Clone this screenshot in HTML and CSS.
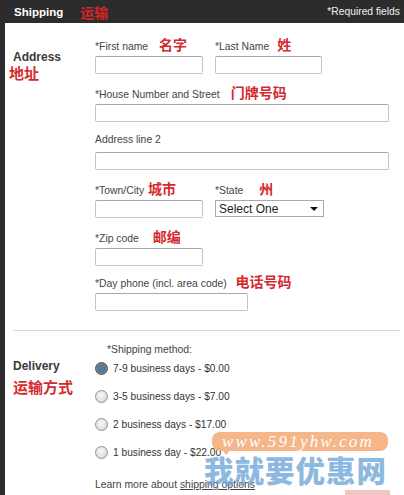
FILE: index.html
```html
<!DOCTYPE html>
<html>
<head>
<meta charset="utf-8">
<link rel="stylesheet" href="styles.css">
</head>
<body>
<div class="page">
  <header class="topbar">
    <span class="title">Shipping</span>
    <span class="cn cn-head">运输</span>
    <span class="req">*Required fields</span>
  </header>
  <main class="panel">
    <section class="sect address">
      <div class="sect-name">
        <div class="en">Address</div>
        <div class="cn cn-side cn-addr">地址</div>
      </div>
      <div class="fields">
        <div class="row">
          <div class="field">
            <div class="lbl">*First name <span class="cn cn-lbl gap8">名字</span></div>
            <div class="inp w108"></div>
          </div>
          <div class="field">
            <div class="lbl">*Last Name <span class="cn cn-lbl gap5">姓</span></div>
            <div class="inp w107"></div>
          </div>
        </div>
        <div class="field">
          <div class="lbl">*House Number and Street <span class="cn cn-lbl gap8">门牌号码</span></div>
          <div class="inp wfull"></div>
        </div>
        <div class="field">
          <div class="lbl">Address line 2</div>
          <div class="inp wfull"></div>
        </div>
        <div class="row">
          <div class="field">
            <div class="lbl">*Town/City <span class="cn cn-lbl gap1">城市</span></div>
            <div class="inp w108"></div>
          </div>
          <div class="field">
            <div class="lbl">*State <span class="cn cn-lbl gap13">州</span></div>
            <div class="sel"><span>Select One</span><span class="caret"></span></div>
          </div>
        </div>
        <div class="field tight">
          <div class="lbl">*Zip code <span class="cn cn-lbl gap11">邮编</span></div>
          <div class="inp w108"></div>
        </div>
        <div class="field last">
          <div class="lbl">*Day phone (incl. area code) <span class="cn cn-lbl gap6">电话号码</span></div>
          <div class="inp w153"></div>
        </div>
      </div>
    </section>
    <hr class="divider">
    <section class="sect delivery">
      <div class="sect-name">
        <div class="en">Delivery</div>
        <div class="cn cn-side cn-del">运输方式</div>
      </div>
      <div class="fields">
        <div class="method-lbl">*Shipping method:</div>
        <div class="opt"><span class="radio on"></span><span>7-9 business days - $0.00</span></div>
        <div class="opt"><span class="radio"></span><span>3-5 business days - $7.00</span></div>
        <div class="opt"><span class="radio"></span><span>2 business days - $17.00</span></div>
        <div class="opt"><span class="radio"></span><span>1 business day - $22.00</span></div>
        <div class="learn">Learn more about <span class="link">shipping options</span></div>
      </div>
    </section>
  </main>
  <div class="wm-bubble">www.591yhw.com</div>
  <div class="wm-text">我就要优惠网</div>
  <div class="wm-red"></div>
</div>
</body>
</html>
```

FILE: styles.css
```css
* { box-sizing: border-box; }
html, body { margin: 0; padding: 0; }
body {
  background: #2c2c2c;
  font-family: "Liberation Sans", Arial, "Noto Sans CJK SC", sans-serif;
  color: #444;
  width: 404px;
  height: 495px;
  overflow: hidden;
}
.page { position: relative; width: 404px; height: 495px; }
.topbar {
  height: 23px;
  display: flex;
  align-items: center;
  padding: 0 4px 0 14px;
  color: #fff;
}
.title { font-weight: bold; font-size: 11.5px; }
.cn {
  font-family: "Noto Sans CJK SC", sans-serif;
  font-weight: bold;
  color: #d42a2f;
}
.cn-head { margin-left: 17px; font-size: 14px; color: #d3262b; }
.req { margin-left: auto; font-size: 10.3px; color: #f2f2f2; }
.panel {
  margin-left: 5px;
  background: #fff;
  height: 472px;
  padding-top: 15px;
}
.sect {
  display: grid;
  grid-template-columns: 82px 1fr;
  padding-left: 8px;
}
.sect-name .en {
  font-weight: bold;
  font-size: 12px;
  line-height: 14px;
  color: #3a3a3a;
}
.address .sect-name { padding-top: 12px; }
.cn-side { font-size: 15px; line-height: 19px; }
.cn-addr { margin-left: -4px; margin-top: -1px; }
.cn-del { margin-top: 4px; }
.fields { display: flex; flex-direction: column; }
.row { display: flex; gap: 12px; }
.field { margin-bottom: 12px; }
.field.tight { margin-bottom: 9px; }
.field.last { margin-bottom: 0; }
.lbl {
  font-size: 10.4px;
  line-height: 12px;
  height: 12px;
  color: #444;
  white-space: nowrap;
}
.cn-lbl { font-size: 14px; line-height: 12px; vertical-align: 0; }
.gap1 { margin-left: 1px; }
.gap5 { margin-left: 5px; }
.gap6 { margin-left: 6px; }
.gap8 { margin-left: 8px; }
.gap11 { margin-left: 11px; }
.gap13 { margin-left: 13px; }
.inp {
  margin-top: 6px;
  height: 18px;
  border: 1px solid #c4c4c4;
  border-top-color: #a8a8a8;
  border-radius: 2px;
  background: #fff;
}
.w108 { width: 108px; }
.w107 { width: 107px; }
.w153 { width: 153px; }
.wfull { width: 294px; }
.sel {
  margin-top: 6px;
  width: 109px;
  height: 17px;
  border: 1px solid #a9a9a9;
  background: #fff;
  display: flex;
  align-items: center;
  justify-content: space-between;
  padding: 0 5px 0 3px;
  font-size: 12px;
  color: #222;
}
.caret {
  width: 0; height: 0;
  border-left: 4px solid transparent;
  border-right: 4px solid transparent;
  border-top: 4px solid #111;
}
.divider {
  border: 0;
  border-top: 1px solid #d8d8d8;
  margin: 19px 4px 0 8px;
  height: 0;
}
.delivery { padding-top: 13px; }
.delivery .sect-name { padding-top: 15px; }
.method-lbl {
  font-size: 10.4px;
  line-height: 12px;
  margin-left: 12px;
  color: #444;
}
.opt {
  display: flex;
  align-items: center;
  gap: 5px;
  font-size: 10.2px;
  color: #333;
  height: 14px;
  margin-top: 4px;
  margin-bottom: 10px;
}
.method-lbl + .opt { margin-top: 5px; }
.radio {
  width: 13px; height: 13px;
  border-radius: 50%;
  border: 1px solid #8f8f8f;
  background: radial-gradient(circle at 45% 40%, #fafafa 0%, #dcdcdc 70%, #c4c4c4 100%);
  flex: none;
}
.radio.on {
  border-color: #4d4d4d;
  background: radial-gradient(circle, #2f7fb8 0%, #3c8ac4 30%, #6b6b6b 45%, #9a9a9a 80%);
}
.learn {
  margin-top: 10px;
  font-size: 10.4px;
  line-height: 12px;
  color: #444;
}
.link { text-decoration: underline; }
.wm-bubble {
  position: absolute;
  left: 212px;
  top: 432px;
  width: 176px;
  height: 19px;
  background: #f5b07f;
  border-radius: 8px;
  color: #fff;
  font-family: "Liberation Serif", serif;
  font-style: italic;
  font-size: 17px;
  line-height: 19px;
  letter-spacing: 2.2px;
  padding-left: 10px;
  opacity: 0.92;
}
.wm-bubble::after {
  content: "";
  position: absolute;
  left: 10px;
  bottom: -4px;
  width: 0; height: 0;
  border-left: 4px solid transparent;
  border-right: 4px solid transparent;
  border-top: 5px solid #f5b07f;
}
.wm-text {
  position: absolute;
  left: 204px;
  top: 452px;
  font-family: "Noto Sans CJK SC", sans-serif;
  font-weight: 900;
  font-size: 29.5px;
  line-height: 34px;
  letter-spacing: 1px;
  color: rgba(110, 165, 215, 0.78);
}
.wm-red {
  position: absolute;
  left: 345px;
  top: 490px;
  width: 45px;
  height: 5px;
  background: #f3c6c6;
}
```
